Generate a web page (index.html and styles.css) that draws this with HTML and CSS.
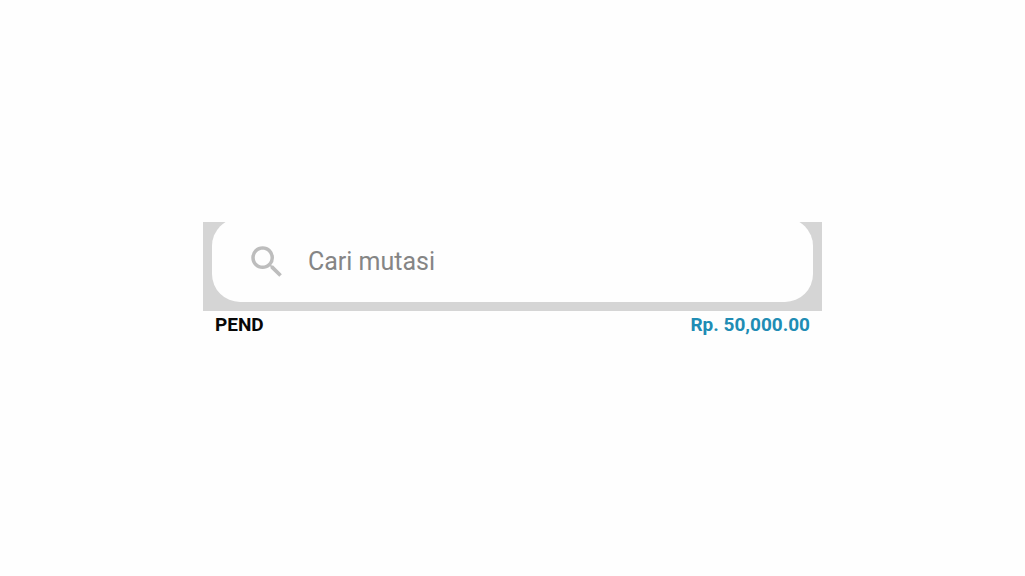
FILE: index.html
```html
<!DOCTYPE html>
<html lang="id">
<head>
<meta charset="utf-8">
<meta name="viewport" content="width=device-width, initial-scale=1">
<title>Mutasi</title>
<link rel="stylesheet" href="styles.css">
</head>
<body>
<main class="statement">
  <form class="search-bar" role="search">
    <label class="search-field">
      <svg class="search-icon" viewBox="0 0 24 24" aria-hidden="true"><path fill="currentColor" d="M15.5 14h-.79l-.28-.27A6.471 6.471 0 0 0 16 9.5 6.5 6.5 0 1 0 9.5 16c1.61 0 3.09-.59 4.23-1.57l.27.28v.79l5 4.99L20.49 19l-4.99-5zm-6 0C7.01 14 5 11.99 5 9.5S7.01 5 9.5 5 14 7.01 14 9.5 11.99 14 9.5 14z"/></svg>
      <input class="search-input" type="text" placeholder="Cari mutasi" aria-label="Cari mutasi">
    </label>
  </form>
  <div class="entry">
    <span class="entry-status">PEND</span>
    <span class="entry-amount">Rp. 50,000.00</span>
  </div>
</main>
</body>
</html>
```
FILE: styles.css
```css
* {
  box-sizing: border-box;
}

body {
  margin: 0;
  min-height: 100vh;
  background: #fefefe;
  font-family: Roboto, "Liberation Sans", sans-serif;
}

.statement {
  width: 100%;
  max-width: 619px;
  margin: 0 auto;
  padding-top: 222px;
}

.search-bar {
  display: flex;
  overflow: hidden;
  padding: 0 9px 9px;
  background: #d5d5d5;
}

.search-field {
  display: flex;
  flex: 1;
  align-items: center;
  gap: 20px;
  height: 84px;
  margin-top: -4px;
  padding: 4px 34px 0;
  border-radius: 28px;
  background: #fefefe;
}

.search-icon {
  flex: none;
  width: 42px;
  height: 42px;
  color: #bdbdbd;
}

.search-input {
  flex: 1;
  min-width: 0;
  padding: 0;
  border: 0;
  outline: 0;
  background: transparent;
  color: #444;
  font: 400 25px/32px Roboto, "Liberation Sans", sans-serif;
}

.search-input::placeholder {
  color: #858585;
  opacity: 1;
}

.entry {
  display: flex;
  justify-content: space-between;
  padding: 2px 12px;
  font-size: 19px;
  font-weight: 700;
  line-height: 24px;
}

.entry-status {
  color: #080808;
}

.entry-amount {
  color: #208cb4;
}
```
